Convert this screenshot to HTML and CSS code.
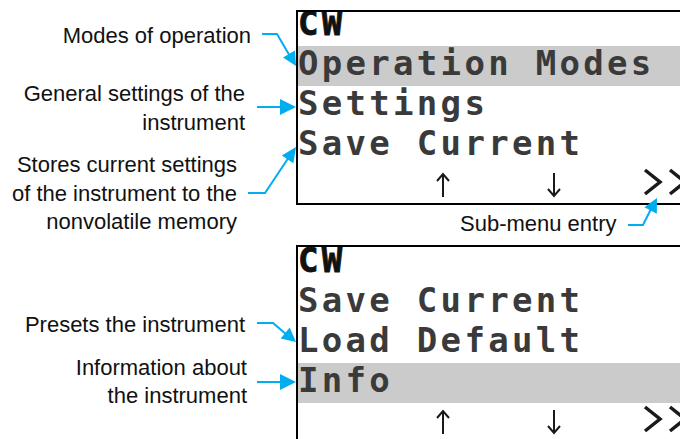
FILE: index.html
```html
<!DOCTYPE html>
<html lang="en">

<head>
    <meta charset="UTF-8">
    <meta name="viewport" content="width=device-width, initial-scale=1.0">
    <title>Menu</title>
    <link rel="stylesheet" href="styles.css">
</head>

<body>
    <main class="figure">
        <section class="panel panel-first">
            <div class="notes">
                <p class="note note-modes">Modes of operation</p>
                <p class="note note-general">General settings of the<br>instrument</p>
                <p class="note note-stores">Stores current settings<br>of the instrument to the<br>nonvolatile memory</p>
            </div>
            <div class="side">
                <div class="screen screen-first">
                    <div class="rows rows-first">
                        <div class="row row-title">CW</div>
                        <div class="row row-active">Operation Modes</div>
                        <div class="row">Settings</div>
                        <div class="row">Save Current</div>
                        <div class="row nav">
                            <svg class="key key-up" width="16" height="26" viewBox="0 0 16 26"><path d="M8 2V25M2 9L8 2L14 9" /></svg>
                            <svg class="key key-down" width="16" height="26" viewBox="0 0 16 26"><path d="M8 1V24M2 17L8 24L14 17" /></svg>
                            <svg class="key key-next" width="50" height="28" viewBox="0 0 50 28"><path d="M2 2L17 14L2 26M27 2L42 14L27 26" /></svg>
                        </div>
                    </div>
                </div>
                <p class="note note-submenu">Sub-menu entry</p>
            </div>
        </section>

        <section class="panel panel-second">
            <div class="notes">
                <p class="note note-presets">Presets the instrument</p>
                <p class="note note-info">Information about<br>the instrument</p>
            </div>
            <div class="side">
                <div class="screen screen-second">
                    <div class="rows rows-second">
                        <div class="row row-title">CW</div>
                        <div class="row">Save Current</div>
                        <div class="row">Load Default</div>
                        <div class="row row-active">Info</div>
                        <div class="row nav">
                            <svg class="key key-up" width="16" height="26" viewBox="0 0 16 26"><path d="M8 2V25M2 9L8 2L14 9" /></svg>
                            <svg class="key key-down" width="16" height="26" viewBox="0 0 16 26"><path d="M8 1V24M2 17L8 24L14 17" /></svg>
                            <svg class="key key-next" width="50" height="28" viewBox="0 0 50 28"><path d="M2 2L17 14L2 26M27 2L42 14L27 26" /></svg>
                        </div>
                    </div>
                </div>
            </div>
        </section>

        <!-- callout arrows drawn over both panels -->
        <svg class="callouts" width="680" height="439" viewBox="0 0 680 439">
            <path d="M262 34H277L291 58" />
            <polygon points="296,66 283,57.6 295,50.4" />

            <path d="M257 107H282" />
            <polygon points="296,107 280,99 280,115" />

            <path d="M248 193H265L289 157" />
            <polygon points="296,147 293.4,163.3 281.8,155.5" />

            <path d="M628 225H643L651 209" />
            <polygon points="657,198 656.8,213.7 644.4,207.3" />

            <path d="M257 323H273L287 335" />
            <polygon points="296,342 280.7,338.4 289.7,327.6" />

            <path d="M257 382H282" />
            <polygon points="296,382 280,374 280,390" />
        </svg>
    </main>
</body>

</html>
```

FILE: styles.css
```css
/* page */
body {
    margin: 0;
    background: #fff;
    overflow: hidden;
}

.figure {
    position: relative;
    width: 680px;
    height: 439px;
    overflow: hidden;
    padding-top: 10px;
    box-sizing: border-box;
}

.panel {
    display: flex;
    align-items: flex-start;
}

.panel-second {
    margin-top: 6px;
}

/* notes on the left */
.notes {
    width: 296px;
    flex-shrink: 0;
    display: flex;
    flex-direction: column;
}

.note {
    margin: 0;
    font-family: "Liberation Sans", Arial, sans-serif;
    font-size: 22px;
    line-height: 28.5px;
    color: #111;
    text-align: right;
}

.note-modes {
    margin-top: 12px;
    padding-right: 45px;
}

.note-general {
    margin-top: 29.5px;
    padding-right: 51px;
}

.note-stores {
    margin-top: 14px;
    padding-right: 59px;
}

.note-presets {
    margin-top: 66px;
    padding-right: 51px;
}

.note-info {
    margin-top: 14.5px;
    padding-right: 49px;
}

.note-submenu {
    margin-top: 5px;
    padding-left: 164px;
    text-align: left;
}

/* display on the right */
.side {
    display: flex;
    flex-direction: column;
}

.screen {
    width: 420px;
    border: 2px solid #000;
    overflow: hidden;
    box-sizing: border-box;
}

.screen-first {
    height: 195px;
}

.screen-second {
    height: 220px;
}

.rows-first {
    margin-top: -6px;
}

.rows-second {
    margin-top: -4px;
}

.row {
    height: 40px;
    box-sizing: border-box;
    padding-bottom: 6px;
    font-family: "DejaVu Sans Mono", "Liberation Mono", monospace;
    font-size: 34px;
    font-weight: bold;
    line-height: 34px;
    letter-spacing: 3.3px;
    color: #3a3a3a;
    white-space: nowrap;
}

.row-title {
    color: #111;
    -webkit-text-stroke: 0.8px #111;
}

.row-active {
    background: #cbcbcb;
}

/* soft keys */
.nav {
    display: flex;
    align-items: flex-start;
}

.key path {
    fill: none;
    stroke: #1a1a1a;
}

.key-up {
    margin-top: 6px;
    margin-left: 137px;
}

.key-up path,
.key-down path {
    stroke-width: 2;
}

.key-down {
    margin-top: 6px;
    margin-left: 95px;
}

.key-next {
    margin-top: 2px;
    margin-left: 81px;
}

.key-next path {
    stroke-width: 3.5;
}

/* callouts */
.callouts {
    position: absolute;
    left: 0;
    top: 0;
    pointer-events: none;
}

.callouts path {
    fill: none;
    stroke: #00aeef;
    stroke-width: 2;
}

.callouts polygon {
    fill: #00aeef;
}
```
